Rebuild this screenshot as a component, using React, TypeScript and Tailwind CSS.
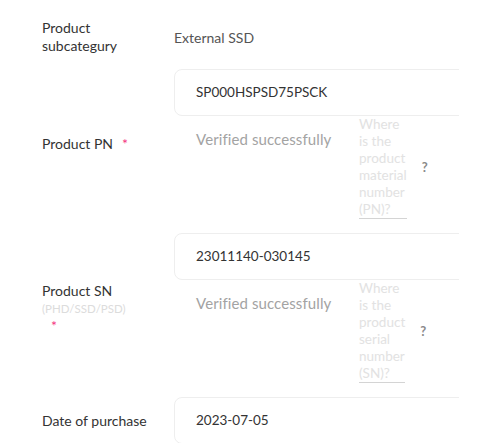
import React from 'react';

const font = { fontFamily: 'Lato, "Noto Sans", sans-serif' };

const Star = () => <span className="ml-[9px] text-[#f4347f]">*</span>;

const HelpRow = ({ help }: { help: string[] }) => (
  <div className="flex items-start">
    <p className="w-[185px] shrink-0 pl-[22px] pt-[13px] text-[15px] leading-[20px] tracking-[0.1px] text-[#a3a3a3]">Verified successfully</p>
    <div className="flex items-center">
      <span className="block w-min border-b border-[#d4d4d4] text-[13.5px] leading-[17px] text-[#e2e2e2]">
        {help.join(' ')}
      </span>
      <span className="ml-[15px] text-[13px] font-bold text-[#8a8a8a]">?</span>
    </div>
  </div>
);

const Input = ({ value }: { value: string }) => (
  <div className="flex h-[47px] w-[340px] items-center rounded-lg border border-[#eeeeee] bg-white pl-[21px] text-[13.5px] text-[#333]">
    {value}
  </div>
);

export default function App() {
  return (
    <div className="min-h-screen bg-white pl-[42px] pt-[19px]" style={font}>
      <div className="flex flex-col gap-[14px]">
        <div className="flex items-center">
          <div className="w-[132px] shrink-0 pr-[28px] text-[14px] leading-[18px] text-[#333]">Product subcategury</div>
          <div className="text-[14px] text-[#555]">External SSD</div>
        </div>

        <div className="flex items-center">
          <div className="w-[132px] shrink-0 text-[14px] leading-[18px] text-[#333]">
            Product PN<Star />
          </div>
          <div className="w-[285px] overflow-hidden">
            <Input value="SP000HSPSD75PSCK" />
            <HelpRow help={['Where', 'is the', 'product', 'material', 'number', '(PN)?']} />
          </div>
        </div>

        <div className="flex items-center">
          <div className="w-[132px] shrink-0 pr-[20px] text-[14px] leading-[18px] text-[#333]">
            Product SN
            <span className="block text-[11.5px] leading-[17px] text-[#dcdcdc]">(PHD/SSD/PSD)</span>
            <Star />
          </div>
          <div className="w-[285px] overflow-hidden">
            <Input value="23011140-030145" />
            <HelpRow help={['Where', 'is the', 'product', 'serial', 'number', '(SN)?']} />
          </div>
        </div>

        <div className="flex items-center">
          <div className="w-[132px] shrink-0 text-[14px] leading-[18px] text-[#333]">Date of purchase</div>
          <div className="w-[285px] overflow-hidden">
            <Input value="2023-07-05" />
          </div>
        </div>
      </div>
    </div>
  );
}
